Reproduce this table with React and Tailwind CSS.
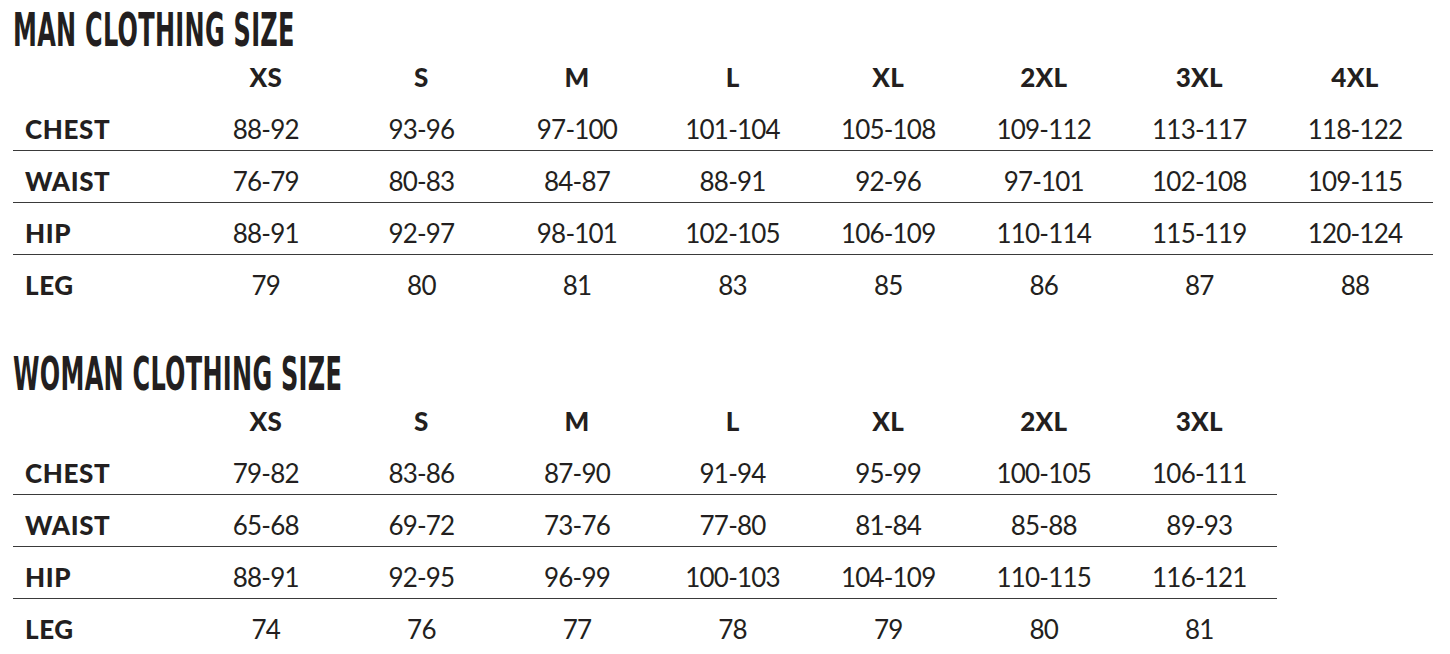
import React from "react";

const man = {
  title: "MAN CLOTHING SIZE",
  sizes: ["XS", "S", "M", "L", "XL", "2XL", "3XL", "4XL"],
  rows: [
    ["CHEST", ["88-92", "93-96", "97-100", "101-104", "105-108", "109-112", "113-117", "118-122"]],
    ["WAIST", ["76-79", "80-83", "84-87", "88-91", "92-96", "97-101", "102-108", "109-115"]],
    ["HIP", ["88-91", "92-97", "98-101", "102-105", "106-109", "110-114", "115-119", "120-124"]],
    ["LEG", ["79", "80", "81", "83", "85", "86", "87", "88"]],
  ],
};

const woman = {
  title: "WOMAN CLOTHING SIZE",
  sizes: ["XS", "S", "M", "L", "XL", "2XL", "3XL"],
  rows: [
    ["CHEST", ["79-82", "83-86", "87-90", "91-94", "95-99", "100-105", "106-111"]],
    ["WAIST", ["65-68", "69-72", "73-76", "77-80", "81-84", "85-88", "89-93"]],
    ["HIP", ["88-91", "92-95", "96-99", "100-103", "104-109", "110-115", "116-121"]],
    ["LEG", ["74", "76", "77", "78", "79", "80", "81"]],
  ],
};

function Table({ data, className }) {
  return (
    <div className={className}>
      <div className="h-[45px] leading-[45px] overflow-visible whitespace-nowrap">
        <span
          className="inline-block origin-left scale-x-[0.58] text-[46px] font-bold text-[#231f20] tracking-[0.5px]"
          style={{ fontFamily: '"DejaVu Sans Condensed", "DejaVu Sans", sans-serif' }}
        >
          {data.title}
        </span>
      </div>
      <div className="w-max" style={{ fontFamily: "Lato, sans-serif" }}>
        <div className="flex h-[46px] items-center pt-[3px]">
          <div className="w-[175px]" />
          {data.sizes.map((s) => (
            <div key={s} className="w-[155.6px] text-center text-[26px] font-black text-[#231f20] tracking-[0.3px]">
              {s}
            </div>
          ))}
        </div>
        {data.rows.map(([label, vals], i) => (
          <div
            key={label}
            className={
              i < data.rows.length - 1
                ? "flex h-[52px] items-center pt-[9px] border-b border-[#3a3a3a]"
                : "flex h-[52px] items-center pt-[9px]"
            }
          >
            <div className="w-[175px] pl-[12px] text-[26px] font-black text-[#231f20] tracking-[0.6px]">{label}</div>
            {vals.map((v, j) => (
              <div
                key={j}
                className="w-[155.6px] text-center text-[26px] text-[#231f20] tracking-[-0.8px]"
              >
                {v}
              </div>
            ))}
          </div>
        ))}
      </div>
    </div>
  );
}

export default function App() {
  return (
    <div className="w-[1450px] h-[654px] bg-white overflow-hidden pl-[13px] pt-[8px]">
      <Table data={man} />
      <Table data={woman} className="mt-[45px]" />
    </div>
  );
}
